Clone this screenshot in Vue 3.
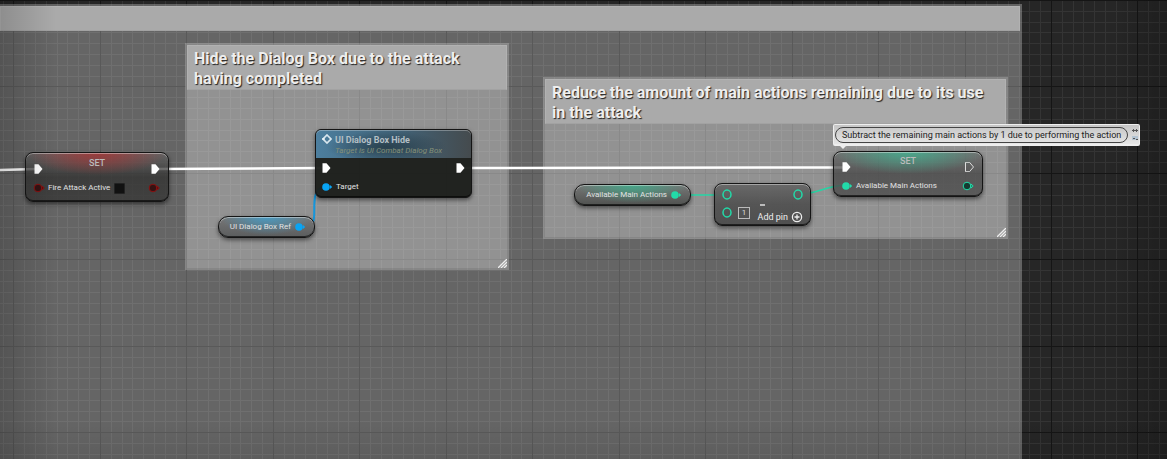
<script setup>
const steps = (start, count) =>
  Array.from({ length: count }, (_, i) => ({
    at: Math.round(start + (i * 86.46) / 8),
    major: i % 8 === 0
  }))

const columns = steps(-73, 260)
const rows = steps(0, 200)
</script>

<template>
  <main class="graph">
    <svg class="layer" aria-hidden="true" shape-rendering="crispEdges">
      <g v-for="kind in [false, true]" :key="String(kind)" :class="kind ? 'major' : 'minor'">
        <template v-for="c in columns" :key="'c' + c.at">
          <rect v-if="c.major === kind" :x="c.at" y="0" width="1" height="100%" />
        </template>
        <template v-for="r in rows" :key="'r' + r.at">
          <rect v-if="r.major === kind" x="0" :y="r.at" width="100%" height="1" />
        </template>
      </g>
    </svg>

    <section class="comment outer"><header></header></section>
    <section class="comment hide-box">
      <header><h2>Hide the Dialog Box due to the attack having completed</h2></header>
      <svg class="grip" viewBox="0 0 9 9" aria-hidden="true"><path d="M0 9L9 0M3 9L9 3M6 9L9 6" /></svg>
    </section>
    <section class="comment reduce-box">
      <header><h2>Reduce the amount of main actions remaining due to its use in the attack</h2></header>
      <svg class="grip" viewBox="0 0 9 9" aria-hidden="true"><path d="M0 9L9 0M3 9L9 3M6 9L9 6" /></svg>
    </section>

    <svg class="layer wires" aria-hidden="true">
      <defs>
        <symbol id="exec" viewBox="0 0 9 10"><path d="M.5 .3H4.500L8.500 5L4.500 9.700H.5Z" /></symbol>
        <symbol id="pin" viewBox="0 0 12 10"><circle cx="5" cy="5" r="3.800" /><path d="M9 3L11.200 5L9 7Z" /></symbol>
      </defs>
      <path class="exec-wire" d="M0 170L36 169M156 169L324 168M462 168L844 167.500" />
      <path class="object-wire" d="M301 227C320 226 312 216 315 197C317 189 320 187 326 186" />
      <path class="int-wire" d="M678 195H724M800 194C818 194 824 186 846 185" />
    </svg>

    <article class="node set fire">
      <div class="top">
        <svg class="exec"><use href="#exec" /></svg>
        <h3>SET</h3>
        <svg class="exec"><use href="#exec" /></svg>
      </div>
      <div class="pins">
        <svg class="pin red"><use href="#pin" /></svg>
        <label for="fire-active">Fire Attack Active</label>
        <input id="fire-active" type="checkbox" />
        <svg class="pin red out"><use href="#pin" /></svg>
      </div>
    </article>

    <article class="node call">
      <header>
        <svg class="event" viewBox="0 0 10 10" aria-hidden="true">
          <path class="rim" d="M5 1L9 5L5 9L1 5Z" />
          <path class="notch" d="M0 5H3" />
        </svg>
        <div>
          <h3>UI Dialog Box Hide</h3>
          <p>Target is UI Combat Dialog Box</p>
        </div>
      </header>
      <div class="execs">
        <svg class="exec"><use href="#exec" /></svg>
        <svg class="exec"><use href="#exec" /></svg>
      </div>
      <div class="pins">
        <svg class="pin blue"><use href="#pin" /></svg>
        <span>Target</span>
      </div>
    </article>

    <article class="node variable ref">
      <span>UI Dialog Box Ref</span>
      <svg class="pin blue"><use href="#pin" /></svg>
    </article>

    <article class="node variable actions">
      <span>Available Main Actions</span>
      <svg class="pin teal"><use href="#pin" /></svg>
    </article>

    <article class="node math">
      <div class="line">
        <svg class="ring" viewBox="0 0 10 10"><ellipse cx="5" cy="5" rx="4" ry="4.400" /></svg>
        <svg class="ring" viewBox="0 0 10 10"><ellipse cx="5" cy="5" rx="4" ry="4.400" /></svg>
      </div>
      <div class="line">
        <svg class="ring" viewBox="0 0 10 10"><ellipse cx="5" cy="5" rx="4" ry="4.400" /></svg>
        <input class="number" type="text" value="1" aria-label="Subtrahend" />
        <button type="button">
          Add pin
          <svg viewBox="0 0 12 12" aria-hidden="true"><circle cx="6" cy="6" r="4.600" /><path d="M6 3.500V8.500M3.500 6H8.500" /></svg>
        </button>
      </div>
      <i class="minus"></i>
    </article>

    <article class="node set remaining">
      <div class="top">
        <svg class="exec"><use href="#exec" /></svg>
        <h3>SET</h3>
        <svg class="exec hollow"><use href="#exec" /></svg>
      </div>
      <div class="pins">
        <svg class="pin teal"><use href="#pin" /></svg>
        <span>Available Main Actions</span>
        <svg class="pin teal open out"><use href="#pin" /></svg>
      </div>
    </article>

    <div class="vignette"></div>

    <aside class="bubble">
      <p>Subtract the remaining main actions by 1 due to performing the action</p>
      <svg viewBox="0 0 6 16" aria-hidden="true">
        <path class="dark" d="M0 3.500H6M1.500 2V5M4.500 2V5" />
        <path class="pale" d="M0 9H6V13H0Z" />
        <path class="dark" d="M1 11.500H3M4 12.500H6" />
      </svg>
    </aside>
  </main>
</template>

<style>
body {
  background: #262626;
}
</style>

<style scoped>
.graph {
  position: relative;
  min-height: 100vh;
  overflow: hidden;
  background: #262626;
  font-family: Roboto, "Liberation Sans", sans-serif;
  font-size: 8px;
  line-height: 12px;
  color: #e2e2e2;
}
h2, h3, p {
  margin: 0;
}
.layer {
  position: absolute;
  inset: 0;
  width: 100%;
  height: 100%;
}
.minor {
  fill: #343434;
}
.major {
  fill: #151515;
}
.vignette {
  position: absolute;
  inset: 0;
  pointer-events: none;
  background:
    linear-gradient(90deg, rgba(0, 0, 0, .17), transparent 56px),
    linear-gradient(270deg, rgba(0, 0, 0, .2), transparent 56px),
    linear-gradient(0deg, rgba(0, 0, 0, .08), transparent 40px);
}

.comment {
  position: absolute;
  box-sizing: border-box;
  border: 2px solid rgba(90, 90, 90, .2);
  background: rgba(255, 255, 255, .295);
}
.comment header {
  box-sizing: border-box;
  height: 45px;
  padding: 3px 6px;
  border: 1px solid #b2b2b2;
  border-bottom-color: #a2a2a2;
  background: #aaa;
}
.comment h2 {
  font-size: 16px;
  line-height: 20px;
  font-weight: 700;
  color: #eee;
  text-shadow: 1px 1px 1px #222;
}
.outer {
  left: -2px;
  top: 4px;
  bottom: -2px;
  width: 1024px;
}
.outer header {
  height: 25px;
}
.hide-box {
  left: 185px;
  top: 43px;
  width: 324px;
  height: 227px;
}
.reduce-box {
  left: 543px;
  top: 77px;
  width: 465px;
  height: 162px;
}
.grip {
  position: absolute;
  right: 0;
  bottom: 0;
  width: 9px;
  height: 9px;
  stroke: #eee;
  stroke-width: 1.300;
}

.wires {
  fill: none;
}
.exec-wire {
  stroke: #fff;
  stroke-width: 2.500;
}
.object-wire {
  stroke: #1596dc;
  stroke-width: 2;
}
.int-wire {
  stroke: #25d5a5;
  stroke-width: 1.500;
}

.node {
  position: absolute;
  box-sizing: border-box;
  border: 1px solid #151515;
  border-radius: 8px;
  box-shadow: 0 2px 4px rgba(0, 0, 0, .5), inset 0 1px 0 rgba(255, 255, 255, .4), inset 0 -1px 0 rgba(0, 0, 0, .6);
}
.exec {
  flex: none;
  width: 9px;
  height: 10px;
  fill: #fff;
}
.hollow {
  fill: none;
  stroke: #ddd;
}
.pin {
  flex: none;
  width: 12px;
  height: 10px;
}
.blue {
  fill: #08a4f4;
}
.teal {
  fill: #22dba9;
}
.red {
  fill: #351313;
  stroke: #8b1111;
}
.open {
  fill: #153a31;
  stroke: #22dba9;
}
.pins {
  display: flex;
  align-items: center;
}
.pins .pin {
  margin-right: 3px;
}
.pins .out {
  margin: 0 0 0 auto;
}
.top {
  display: flex;
  justify-content: space-between;
  align-items: flex-end;
  height: 17px;
  padding: 0 8px;
}
.top h3 {
  align-self: flex-start;
  font-size: 9px;
  font-weight: 500;
  color: #bbb;
}
.set .pins {
  padding: 0 8px 0 7px;
  margin-top: 8px;
}

.fire {
  left: 25px;
  top: 152px;
  width: 144px;
  padding: 4px 0 7px;
  background:
    radial-gradient(ellipse 70px 22px at 50% 0, rgba(175, 45, 45, .75), transparent),
    linear-gradient(rgba(100, 100, 100, .7), rgba(50, 50, 49, .8) 50%, rgba(55, 55, 54, .8));
}
.fire input {
  appearance: none;
  width: 11px;
  height: 11px;
  margin: 0 0 0 4px;
  border: 1px solid #222;
  border-radius: 1px;
  background: #111;
}
.remaining {
  left: 833px;
  top: 151px;
  width: 150px;
  padding: 3px 0 4px;
  background:
    radial-gradient(ellipse 75px 22px at 50% 0, rgba(55, 190, 150, .7), transparent),
    linear-gradient(rgba(100, 100, 100, .7), rgba(66, 66, 66, .75) 50%, rgba(76, 76, 76, .8));
}

.call {
  left: 315px;
  top: 129px;
  width: 157px;
  padding-bottom: 4px;
  border-radius: 6px;
  background: rgba(28, 30, 27, .96);
}
.call header {
  display: flex;
  gap: 3px;
  padding: 4px 6px 0;
  height: 24px;
  border-radius: 5px 5px 0 0;
  background:
    radial-gradient(ellipse 60px 16px at 45% 60%, rgba(35, 55, 66, .8), transparent),
    linear-gradient(90deg, #4d7f9f, #41647a 50%, #454b4e);
  box-shadow: inset 0 1px 0 rgba(255, 255, 255, .3);
}
.call h3 {
  font-size: 9px;
  line-height: 12px;
  font-weight: 700;
  color: #b4bfc5;
}
.call p {
  font-style: italic;
  line-height: 10px;
  color: #849078;
}
.event {
  width: 10px;
  height: 10px;
  fill: none;
}
.rim {
  stroke: #d8e6ee;
  stroke-width: 1.700;
}
.notch {
  stroke: #fff;
}
.execs {
  display: flex;
  justify-content: space-between;
  padding: 5px 6px 0;
}
.call .pins {
  padding: 8px 5px 0;
}

.variable {
  display: flex;
  align-items: center;
  justify-content: flex-end;
  gap: 3px;
  height: 22px;
  padding-right: 8px;
  border-radius: 10px;
}
.ref {
  left: 218px;
  top: 216px;
  width: 97px;
  background:
    radial-gradient(ellipse 46px 18px at 50% 0, rgba(65, 160, 205, .85), transparent),
    linear-gradient(#777, #5b5d5e);
}
.actions {
  left: 574px;
  top: 184px;
  width: 117px;
  background:
    radial-gradient(ellipse 56px 18px at 50% 0, rgba(60, 175, 140, .85), transparent),
    linear-gradient(#777, #505250);
}

.math {
  left: 714px;
  top: 183px;
  width: 97px;
  padding: 2px 7px 3px;
  background: linear-gradient(rgba(100, 100, 100, .9), rgba(78, 78, 78, .9) 50%, rgba(72, 72, 72, .9));
}
.line {
  display: flex;
  justify-content: space-between;
  align-items: center;
  height: 16px;
}
.line + .line {
  height: 19px;
  margin-top: 1px;
}
.ring {
  width: 10px;
  height: 11px;
  fill: none;
  stroke: #22dba9;
  stroke-width: 1.500;
}
.number {
  box-sizing: border-box;
  width: 12px;
  height: 12px;
  margin: 0 auto 0 6px;
  padding: 0;
  border: 1px solid #bbb;
  background: transparent;
  font: inherit;
  line-height: 10px;
  text-align: center;
  color: #ddd;
}
.math button {
  display: flex;
  align-items: center;
  gap: 3px;
  height: 12px;
  margin-top: 8px;
  padding: 0;
  border: 0;
  background: none;
  font: inherit;
  font-size: 9px;
  color: #eee;
}
.math button svg {
  width: 12px;
  height: 12px;
  fill: none;
  stroke: #eee;
  stroke-width: 1.300;
}
.minus {
  position: absolute;
  left: 45px;
  top: 20px;
  width: 5px;
  height: 2px;
  background: #bbb;
}

.bubble {
  position: absolute;
  left: 833px;
  top: 124px;
  box-sizing: border-box;
  display: flex;
  align-items: center;
  gap: 4px;
  width: 307px;
  height: 22px;
  padding: 0 1px;
  border: 1px solid #eee;
  border-bottom-width: 2px;
  border-radius: 2px;
  background: linear-gradient(#c5c5c5, #e6e6e6);
  color: #222;
}
.bubble::after {
  content: "";
  position: absolute;
  left: 6px;
  top: 21px;
  border: 3px solid transparent;
  border-top-color: #eee;
  border-bottom: 0;
}
.bubble p {
  box-sizing: border-box;
  width: 293px;
  height: 16px;
  padding-left: 6px;
  border: 1px solid #444;
  border-radius: 8px;
  font-size: 9px;
  line-height: 14px;
  white-space: nowrap;
}
.bubble svg {
  width: 6px;
  height: 16px;
  fill: none;
}
.dark {
  stroke: #555;
}
.bubble .pale {
  fill: #b4c4d2;
}
</style>
